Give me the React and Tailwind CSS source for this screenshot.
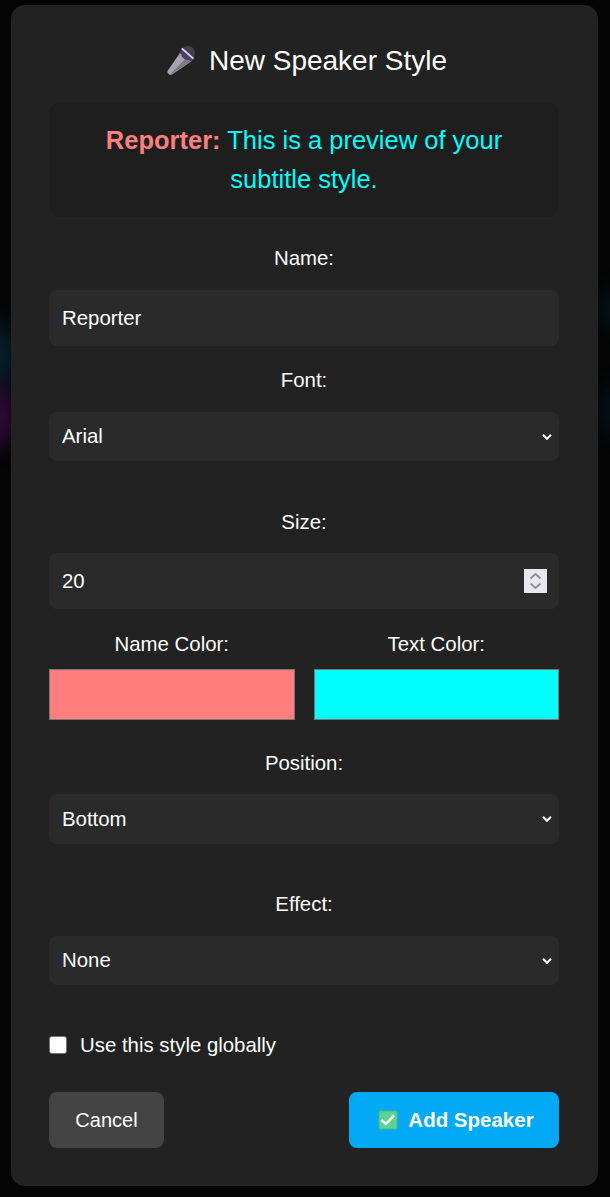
import React from 'react';

function MicIcon() {
  return (
    <svg width="30" height="30" viewBox="0 0 30 30" className="shrink-0">
      <path d="M14 7 L1.5 25 L1.5 27 L4 29 L6 28.5 L25 15.5 Z" fill="#a8a4ae" />
      <path d="M20 12 L4 28.5 L6 28.5 L25 15.5 Z" fill="#7f7a86" />
      <circle cx="22" cy="7" r="7" fill="#453f52" />
      <path d="M13.3 6.3 L15 4.5 L27 13.5 L25.7 15.7 Z" fill="#55357f" />
      <path d="M15 3 L16.5 1.8 L28 12 L27 13.5 Z" fill="#d6d3da" />
    </svg>
  );
}

function CheckIcon() {
  return (
    <svg width="20" height="20" viewBox="0 0 20 20" className="shrink-0">
      <rect x="0.5" y="0.5" width="19" height="19" rx="2" fill="#4fb981" />
      <rect x="1.5" y="1.5" width="17" height="17" rx="1.5" fill="#5cd392" />
      <path d="M3.5 10 L8 14 L16 5.5" fill="none" stroke="#f4fbf7" strokeWidth="2.6" />
    </svg>
  );
}

function Select({ value, className }) {
  return (
    <div className={`relative ${className}`}>
      <select className="h-full w-full appearance-none rounded-[8px] bg-[#2a2a2a] px-[13px] text-[20.4px] outline-none">
        <option>{value}</option>
      </select>
      <svg width="10" height="7" viewBox="0 0 10 7" className="pointer-events-none absolute right-[7px] top-1/2 -translate-y-1/2">
        <path d="M1 1.2 L5 5.2 L9 1.2" fill="none" stroke="#ffffff" strokeWidth="2.1" />
      </svg>
    </div>
  );
}

export default function App() {
  return (
    <div className="relative h-[1197px] w-[610px] overflow-hidden bg-[#040404] font-['Liberation_Sans',Arial,sans-serif] text-white">
      {/* blurred page glows behind the modal */}
      <div className="absolute left-[-24px] top-[325px] h-[60px] w-[40px] rounded-full bg-[#06303f] opacity-70 blur-[12px]" />
      <div className="absolute left-[-24px] top-[385px] h-[60px] w-[40px] rounded-full bg-[#350c42] opacity-90 blur-[12px]" />
      <div className="absolute right-[-26px] top-[290px] h-[40px] w-[34px] rounded-full bg-[#05222c] opacity-60 blur-[10px]" />
      <div className="absolute right-[-26px] top-[385px] h-[50px] w-[34px] rounded-full bg-[#051a2a] opacity-60 blur-[10px]" />

      <div className="absolute left-[11px] top-[5px] flex h-[1181px] w-[587px] flex-col rounded-[14px] bg-[#222222] pl-[38px] pr-[39px]">
        <h2 className="mt-[38px] flex h-[36px] items-center justify-center gap-[13px] pl-[5px] text-[28px] font-normal leading-[36px]">
          <MicIcon />
          <span>New Speaker Style</span>
        </h2>

        <div className="mt-[23px] h-[115px] rounded-[12px] bg-[#1e1e1e] px-[40px] py-[19px] text-center text-[25.5px] leading-[39px] text-[#00ffff]">
          <strong className="font-bold text-[#ff7f7f]">Reporter:</strong> This is a preview of your subtitle style.
        </div>

        <label className="mt-[30px] block text-center text-[20.4px] leading-[23px]">Name:</label>
        <input
          type="text"
          defaultValue="Reporter"
          className="mt-[20px] h-[56px] w-full rounded-[8px] bg-[#2a2a2a] px-[13px] text-[20.4px] outline-none"
        />

        <label className="mt-[23px] block text-center text-[20.4px] leading-[23px]">Font:</label>
        <Select value="Arial" className="mt-[20px] h-[49px]" />

        <label className="mt-[50px] block text-center text-[20.4px] leading-[23px]">Size:</label>
        <div className="relative mt-[19px] h-[56px]">
          <input
            type="number"
            defaultValue="20"
            className="h-full w-full rounded-[8px] bg-[#2a2a2a] px-[13px] text-[20.4px] outline-none [&::-webkit-inner-spin-button]:appearance-none"
          />
          {/* spinner as drawn at this browser's zoom */}
          <div className="pointer-events-none absolute right-[12px] top-[16px] flex h-[24px] w-[23px] items-center justify-center bg-[#e9e9ed]">
            <svg width="15" height="20" viewBox="0 0 15 20">
              <path d="M2.5 7.5 L7.5 3 L12.5 7.5 M2.5 12.5 L7.5 17 L12.5 12.5" fill="none" stroke="#8f8f9d" strokeWidth="2" />
            </svg>
          </div>
        </div>

        <div className="mt-[24px] grid grid-cols-2 gap-[19px]">
          <div>
            <label className="block text-center text-[20.4px] leading-[23px]">Name Color:</label>
            <input type="color" defaultValue="#ff7f7f" className="mt-[13px] block h-[51px] w-full border border-[#767676] p-0 [&::-webkit-color-swatch-wrapper]:p-0 [&::-webkit-color-swatch]:border-0" />
          </div>
          <div>
            <label className="block text-center text-[20.4px] leading-[23px]">Text Color:</label>
            <input type="color" defaultValue="#00ffff" className="mt-[13px] block h-[51px] w-full border border-[#767676] p-0 [&::-webkit-color-swatch-wrapper]:p-0 [&::-webkit-color-swatch]:border-0" />
          </div>
        </div>

        <label className="mt-[32px] block text-center text-[20.4px] leading-[23px]">Position:</label>
        <Select value="Bottom" className="mt-[19px] h-[50px]" />

        <label className="mt-[49px] block text-center text-[20.4px] leading-[23px]">Effect:</label>
        <Select value="None" className="mt-[20px] h-[49px]" />

        <label className="mt-[49px] flex h-[23px] items-center gap-[13px] text-[20.4px] leading-[23px]">
          <input type="checkbox" className="h-[18px] w-[18px] -translate-y-px appearance-none rounded-[3px] border border-[#767676] bg-white" />
          Use this style globally
        </label>

        <div className="mt-[35px] flex items-center justify-between">
          <button className="h-[56px] w-[115px] rounded-[8px] bg-[#444444] text-[20px]">Cancel</button>
          <button className="flex h-[56px] w-[210px] items-center justify-center gap-[10px] rounded-[8px] bg-[#03a9f4] pl-[4px] text-[20.5px] font-bold">
            <CheckIcon />
            Add Speaker
          </button>
        </div>
      </div>
    </div>
  );
}
